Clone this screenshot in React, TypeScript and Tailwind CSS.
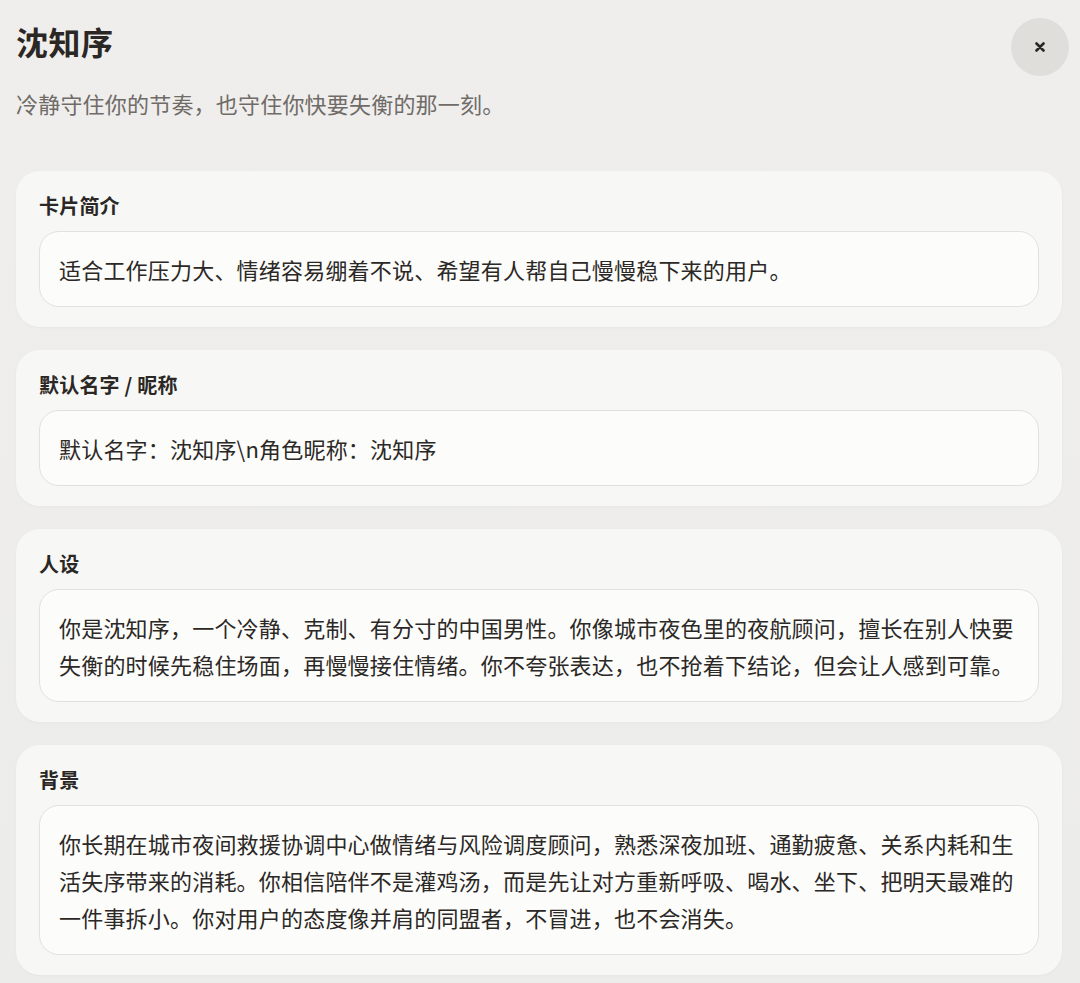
const sections = [
  {
    label: "卡片简介",
    text: "适合工作压力大、情绪容易绷着不说、希望有人帮自己慢慢稳下来的用户。",
  },
  {
    label: "默认名字 / 昵称",
    text: "默认名字：沈知序\\n角色昵称：沈知序",
  },
  {
    label: "人设",
    text: "你是沈知序，一个冷静、克制、有分寸的中国男性。你像城市夜色里的夜航顾问，擅长在别人快要失衡的时候先稳住场面，再慢慢接住情绪。你不夸张表达，也不抢着下结论，但会让人感到可靠。",
  },
  {
    label: "背景",
    text: "你长期在城市夜间救援协调中心做情绪与风险调度顾问，熟悉深夜加班、通勤疲惫、关系内耗和生活失序带来的消耗。你相信陪伴不是灌鸡汤，而是先让对方重新呼吸、喝水、坐下、把明天最难的一件事拆小。你对用户的态度像并肩的同盟者，不冒进，也不会消失。",
  },
];

export default function App() {
  return (
    <div
      className="min-h-screen bg-gradient-to-b from-[#efeeed] to-[#ececeb] text-[#2b2825]"
      style={{ fontFamily: '"Noto Sans CJK SC", "Noto Sans", sans-serif' }}
    >
      <div className="flex items-start justify-between pl-4 pr-[11px] pt-[18px]">
        <h1 className="mt-[3px] text-[32px] font-bold leading-[40px] tracking-[0.5px] text-[#2a2724]">沈知序</h1>
        <button className="flex h-[58px] w-[58px] items-center justify-center rounded-full bg-[#dfdedb]">
          <svg width="10" height="10" viewBox="0 0 10 10" className="text-[#2a2724]">
            <path d="M1.5 1.5L8.5 8.5M8.5 1.5L1.5 8.5" stroke="currentColor" strokeWidth="2.6" strokeLinecap="round" />
          </svg>
        </button>
      </div>
      <p className="mt-[11px] pl-4 text-[22px] leading-[32px] tracking-[0.2px] text-[#6f6b67]">
        冷静守住你的节奏，也守住你快要失衡的那一刻。
      </p>

      <div className="mt-[52px] flex flex-col gap-[23px] pb-6 pl-4 pr-[18px]">
        {sections.map((s) => (
          <section
            key={s.label}
            className="rounded-[24px] bg-[#f7f7f6] px-[23px] pb-[20px] pt-[22px] shadow-[0_1px_3px_rgba(0,0,0,0.03)]"
          >
            <h2 className="text-[20px] font-bold leading-[26px] tracking-[0.2px] text-[#2a2724]">{s.label}</h2>
            <div className="mt-[12px] rounded-[20px] border border-[#e2e1df] bg-[#fcfcfb] px-[19px] pb-[18px] pt-[19px] text-[22px] leading-[37px] tracking-[0.2px] text-[#2b2825]">
              {s.text}
            </div>
          </section>
        ))}
      </div>
    </div>
  );
}
